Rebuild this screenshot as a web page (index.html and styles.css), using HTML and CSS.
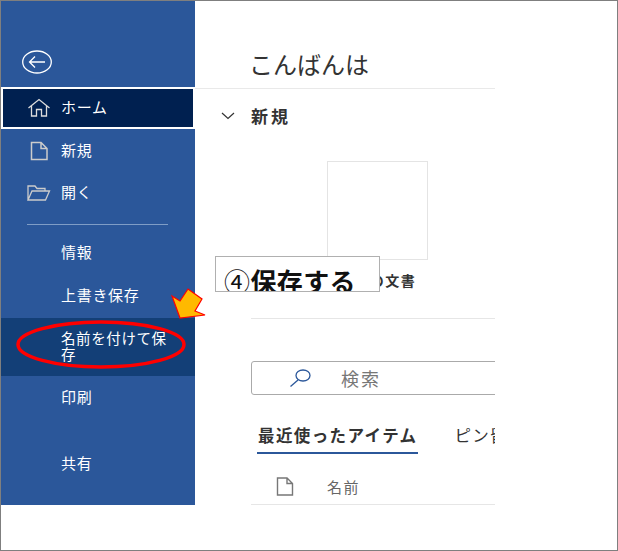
FILE: index.html
```html
<!DOCTYPE html>
<html lang="ja">
	<head>
		<meta charset="utf-8">
		<link rel="stylesheet" href="styles.css">
	</head>
	<body>
		<div class="frame">
			<div class="backstage">
				<nav class="side">
					<div class="side__back">
						<svg width="32" height="26" viewBox="0 0 32 26" fill="none" stroke="#fff" stroke-width="1.3">
							<ellipse cx="16" cy="13" ry="11" rx="14.3"/>
							<path d="M24 13H8.5M14 7.5L8.5 13L14 18.5"/>
						</svg>
					</div>
					<a class="side__item side__item--home">
						<svg class="side__icon" width="24" height="20" viewBox="0 0 24 20" fill="none" stroke="#ddd" stroke-width="1.3">
							<path d="M1.5 10L12 1.5L22.5 10M4.5 8V18H9.5V11.5H14.5V18H19.5V8"/>
						</svg>
						<span class="side__label">ホーム</span>
					</a>
					<a class="side__item">
						<svg class="side__icon" width="24" height="20" viewBox="0 0 24 20" fill="none" stroke="#ccc" stroke-width="1.5">
							<path d="M4.5 1.5H14L20 7.5V18.5H4.5ZM14 1.5V7.5H20"/>
						</svg>
						<span class="side__label">新規</span>
					</a>
					<a class="side__item">
						<svg class="side__icon" width="24" height="20" viewBox="0 0 24 20" fill="none" stroke="#ccc" stroke-width="1.3">
							<path d="M1 17V3H8L10 5.5H18V8M1 17L5 8H22.5L18.5 17Z"/>
						</svg>
						<span class="side__label">開く</span>
					</a>
					<div class="side__rule"></div>
					<a class="side__item side__item--plain">情報</a>
					<a class="side__item side__item--plain side__item--save">上書き保存</a>
					<a class="side__item side__item--plain side__item--active"><span class="side__label">名前を付けて保存</span></a>
					<a class="side__item side__item--plain">印刷</a>
					<a class="side__item side__item--plain side__item--share">共有</a>
				</nav>
				<main class="main">
					<h1 class="main__hello">こんばんは</h1>
					<div class="section">
						<svg width="14" height="8" viewBox="0 0 14 8" fill="none" stroke="#333" stroke-width="1.2">
							<path d="M1 1L7 6.5L13 1"/>
						</svg>
						<h2>新規</h2>
					</div>
					<div class="template">
						<div class="template__page"></div>
						<div class="template__name">白紙の文書</div>
					</div>
					<div class="main__body">
						<div class="search">
							<svg width="24" height="20" viewBox="0 0 24 20" fill="none" stroke="#2b579a" stroke-width="1.3">
								<ellipse cx="15" cy="7.5" rx="7" ry="5.5"/>
								<path d="M10 12L2.5 18.5"/>
							</svg>
							<span>検索</span>
						</div>
						<div class="tabs">
							<span class="tabs__tab tabs__tab--on">最近使ったアイテム</span>
							<span class="tabs__tab">ピン留め</span>
						</div>
						<div class="list-head">
							<svg width="18" height="19" viewBox="0 0 18 19" fill="none" stroke="#777" stroke-width="1.4">
								<path d="M1.5 1H11L16.5 6.5V18H1.5ZM11 1V6.5H16.5"/>
							</svg>
							<span>名前</span>
						</div>
					</div>
				</main>
			</div>
			<div class="callout"><span class="callout__num">④</span>保存する</div>
			<svg class="mark-ellipse" width="172" height="52" viewBox="0 0 172 52" fill="none" stroke="#f00" stroke-width="3.5">
				<ellipse cx="85" cy="25.5" rx="83" ry="22.5"/>
			</svg>
			<svg class="mark-arrow" width="36" height="36" viewBox="0 0 36 36">
				<path d="M2 9L10 14L18 2L32 12L25 24L35 28L10 31Z" fill="#ffb900" stroke="#f00" stroke-width="1.2"/>
			</svg>
		</div>
	</body>
</html>
```
FILE: styles.css
```css
html,
body {
	margin: 0;
	padding: 0;
	background-color: #fff;
}

body {
	font-family: "Noto Sans CJK JP", "Liberation Sans", sans-serif;
}

.frame {
	position: relative;
	width: 618px;
	height: 551px;
	box-sizing: border-box;
	border: 1px solid #7f7f7f;
	overflow: hidden;
}

.backstage {
	display: flex;
	height: 504px;
}

/* left blue menu */
.side {
	width: 194px;
	flex-shrink: 0;
	background-color: #2b579a;
	color: #fff;
	font-size: 15px;
	letter-spacing: 0.7px;
}

.side__back {
	height: 86px;
	box-sizing: border-box;
	padding: 48px 0 0 20px;
}

.side__back svg {
	display: block;
}

.side__item {
	display: flex;
	align-items: center;
	height: 42px;
	padding-left: 60px;
	box-sizing: border-box;
	line-height: 16px;
}

.side__label {
	margin-bottom: 2px;
}

.side__icon {
	margin-left: -34px;
	margin-right: 10px;
	flex-shrink: 0;
}

.side__item--home {
	background-color: #002050;
	border: 2px solid #fff;
	padding-left: 58px;
	margin-bottom: 1px;
}

.side__rule {
	height: 1px;
	margin: 10px 27px 6px 26px;
	background-color: #7f9dc6;
}

.side__item--plain {
	height: 42px;
}

.side__item--save {
	margin: 1px 0 2px;
}

.side__item--active {
	height: 58px;
	padding-right: 20px;
	background-color: #133f77;
	font-size: 14.5px;
	letter-spacing: 0.6px;
}

.side__item--share {
	margin-top: 24px;
}

/* white content column */
.main {
	width: 300px;
	overflow: hidden;
	color: #333;
}

.main__hello {
	margin: 0;
	height: 88px;
	box-sizing: border-box;
	padding: 45px 0 0 54px;
	font-size: 24px;
	line-height: 36px;
	font-weight: 400;
	border-bottom: 1px solid #e9e9e9;
}

.section {
	display: flex;
	align-items: center;
	height: 53px;
	padding-left: 26px;
}

.section h2 {
	margin: 0 0 0 16px;
	font-size: 17px;
	letter-spacing: 3px;
	font-weight: 700;
}

.template {
	margin-left: 132px;
	width: 101px;
	height: 172px;
}

.template__page {
	margin-top: 19px;
	height: 99px;
	box-sizing: border-box;
	border: 1px solid #e4e4e4;
}

.template__name {
	margin-top: 10px;
	width: 101px;
	text-align: center;
	font-size: 14px;
	letter-spacing: 1.5px;
	white-space: nowrap;
	font-weight: 700;
}

.main__body {
	margin-left: 56px;
	width: 280px;
	border-top: 1px solid #e6e6e6;
	margin-top: -15px;
}

.search {
	display: flex;
	align-items: center;
	gap: 29px;
	margin-top: 42px;
	height: 34px;
	box-sizing: border-box;
	width: 300px;
	padding-left: 36px;
	border: 1px solid #aaa;
	border-radius: 3px;
	color: #777;
	font-size: 18px;
	letter-spacing: 2px;
}

.tabs {
	display: flex;
	gap: 36px;
	margin-top: 26px;
	padding-left: 6px;
	white-space: nowrap;
	font-size: 16.5px;
	letter-spacing: 1.4px;
}

.tabs__tab {
	height: 33px;
	line-height: 29px;
	box-sizing: border-box;
}

.tabs__tab--on {
	padding: 0 1px;
	font-weight: 700;
	border-bottom: 2px solid #2b579a;
}

.list-head {
	display: flex;
	align-items: center;
	gap: 33px;
	height: 51px;
	box-sizing: border-box;
	padding: 15px 0 0 25px;
	border-bottom: 1px solid #e6e6e6;
	color: #666;
	font-size: 15px;
	letter-spacing: 1.5px;
}

/* things drawn on top of the screenshot */
.callout {
	position: absolute;
	left: 214px;
	top: 255px;
	width: 165px;
	height: 36px;
	box-sizing: border-box;
	padding-left: 8px;
	background-color: #fff;
	border: 1px solid #b0b0b0;
	overflow: hidden;
	font-size: 26px;
	line-height: 47px;
	letter-spacing: 0.4px;
	font-weight: 700;
	color: #111;
}

.callout__num {
	font-weight: 400;
}

.mark-ellipse {
	position: absolute;
	left: 15px;
	top: 318px;
}

.mark-arrow {
	position: absolute;
	left: 169px;
	top: 286px;
}
```
